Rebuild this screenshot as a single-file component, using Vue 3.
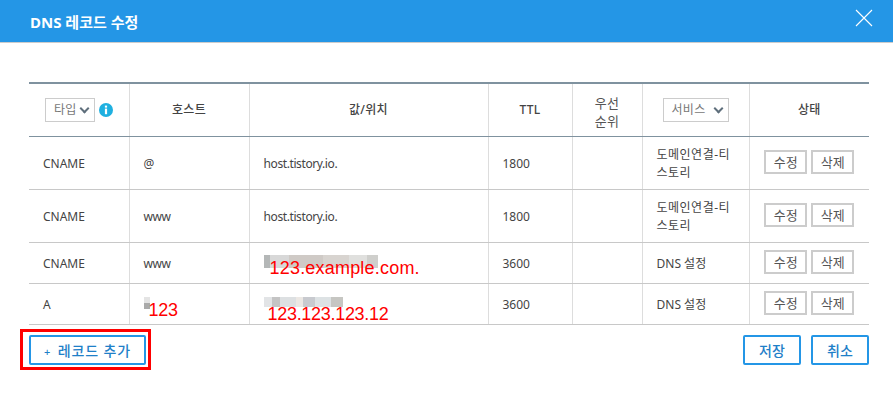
<template>
  <div class="modal">
    <header class="modal-head">
      <h1 class="modal-title">DNS 레코드 수정</h1>
      <button class="close" aria-label="닫기">
        <svg width="18" height="18" viewBox="0 0 18 18"><path d="M1 1L17 17M17 1L1 17" stroke="#fff" stroke-width="1.1" fill="none" /></svg>
      </button>
    </header>

    <div class="modal-body">
      <table class="record-table">
        <colgroup>
          <col style="width: 100px">
          <col style="width: 120px">
          <col style="width: 239px">
          <col style="width: 84px">
          <col style="width: 70px">
          <col style="width: 107px">
          <col style="width: 120px">
        </colgroup>
        <thead>
          <tr>
            <th>
              <div class="type-filter">
                <span class="fake-select small">타입<i class="chev"></i></span>
                <svg class="info" width="14" height="14" viewBox="0 0 14 14">
                  <circle cx="7" cy="7" r="7" fill="#1fb0e0" />
                  <rect x="5.9" y="2.6" width="2.2" height="2" fill="#fff" />
                  <rect x="5.9" y="5.6" width="2.2" height="5.6" fill="#fff" />
                </svg>
              </div>
            </th>
            <th>호스트</th>
            <th>값/위치</th>
            <th>TTL</th>
            <th class="priority">우선<br>순위</th>
            <th><span class="fake-select wide">서비스<i class="chev"></i></span></th>
            <th>상태</th>
          </tr>
        </thead>
        <tbody>
          <tr v-for="row in records" :key="row.id" :class="row.tall ? 'tall' : 'short'">
            <td>{{ row.type }}</td>
            <td class="over">
              {{ row.host }}
              <template v-if="row.hostNote">
                <span class="blur host-blur"></span>
                <span class="note host-note">{{ row.hostNote }}</span>
              </template>
            </td>
            <td class="over">
              {{ row.value }}
              <template v-if="row.valueNote">
                <span class="blur" :class="row.blurClass"></span>
                <span class="note" :class="row.noteClass">{{ row.valueNote }}</span>
              </template>
            </td>
            <td>{{ row.ttl }}</td>
            <td></td>
            <td class="service">{{ row.service }}</td>
            <td class="actions">
              <button class="mini">수정</button>
              <button class="mini">삭제</button>
            </td>
          </tr>
        </tbody>
      </table>

      <div class="foot">
        <span class="add-mark">
          <button class="btn add"><span class="plus">+</span> 레코드 추가</button>
        </span>
        <div class="foot-right">
          <button class="btn">저장</button>
          <button class="btn">취소</button>
        </div>
      </div>
    </div>
  </div>
</template>

<script setup>
const records = [
  { id: 1, type: 'CNAME', host: '@', value: 'host.tistory.io.', ttl: 1800, service: '도메인연결-티스토리', tall: true },
  { id: 2, type: 'CNAME', host: 'www', value: 'host.tistory.io.', ttl: 1800, service: '도메인연결-티스토리', tall: true },
  { id: 3, type: 'CNAME', host: 'www', value: '', valueNote: '123.example.com.', blurClass: 'blur-first', noteClass: 'first', ttl: 3600, service: 'DNS 설정' },
  { id: 4, type: 'A', host: '', hostNote: '123', value: '', valueNote: '123.123.123.12', blurClass: 'blur-second', noteClass: 'second', ttl: 3600, service: 'DNS 설정' },
]
</script>

<style>
html, body {
  margin: 0;
  background: #fff;
}
</style>

<style scoped>
.modal {
  width: 893px;
  height: 405px;
  overflow: hidden;
  font-family: "Noto Sans", "Noto Sans CJK KR", sans-serif;
  font-size: 12px;
  color: #444;
}
.modal-head {
  height: 42px;
  border-bottom: 1px solid #ccc;
  background: #2496e6;
  display: flex;
  align-items: center;
  justify-content: space-between;
  padding: 0 20px 0 30px;
}
.modal-title {
  margin: 0;
  font-size: 15px;
  font-weight: 700;
  color: #fff;
}
.close {
  display: flex;
  margin-top: -6px;
  padding: 0;
  border: 0;
  background: none;
}
.modal-body {
  padding: 39px 24px 0 29px;
}
.record-table {
  width: 840px;
  table-layout: fixed;
  border-collapse: collapse;
  border-top: 2px solid #7f929f;
}
.record-table th {
  height: 52px;
  padding: 0;
  border-left: 1px solid #ddd;
  border-bottom: 1px solid #7f929f;
  font-weight: 500;
  letter-spacing: 0.3px;
  color: #444;
  text-align: center;
  line-height: 18px;
}
.record-table td {
  padding: 2px 14px 0;
  border-left: 1px solid #ddd;
  border-bottom: 1px solid #c8c8c8;
  line-height: 18px;
}
.record-table th:first-child,
.record-table td:first-child {
  border-left: 0;
}
.tall td {
  height: 50px;
}
.short td {
  height: 38px;
}
.record-table .priority {
  height: 48px;
  padding-top: 4px;
  font-size: 13px;
  font-weight: 400;
  color: #555;
}
.type-filter {
  display: flex;
  align-items: center;
  gap: 4px;
  padding-left: 16px;
}
.fake-select {
  box-sizing: border-box;
  display: inline-flex;
  align-items: center;
  justify-content: space-between;
  height: 24px;
  padding: 0 4px 0 8px;
  border: 1px solid #ccc;
  font-weight: 400;
  color: #777;
}
.small {
  width: 50px;
}
.wide {
  width: 66px;
}
.chev {
  width: 5px;
  height: 5px;
  margin: -3px 2px 0 0;
  border-right: 2px solid #5f6f7c;
  border-bottom: 2px solid #5f6f7c;
  transform: rotate(45deg);
}
.service {
  word-break: break-all;
}
.tall .service {
  letter-spacing: 0.5px;
}
.record-table .actions {
  padding: 0;
  text-align: center;
  white-space: nowrap;
  font-size: 0;
}
.mini {
  box-sizing: border-box;
  width: 43px;
  height: 24px;
  padding: 0;
  border: 2px solid #ccc;
  background: #fff;
  font: inherit;
  font-size: 13px;
  color: #555;
}
.mini + .mini {
  margin-left: 4px;
}
.over {
  position: relative;
  letter-spacing: -0.4px;
}
.blur {
  position: absolute;
  display: block;
}
.blur-first {
  left: 14px;
  top: 12px;
  width: 114px;
  height: 13px;
  background:
    linear-gradient(90deg, #b4b7b7 0 5%, #d8d8d8 5% 22%, #cfcac6 22% 52%, #d8d4d0 52% 75%, #e0e0de 75% 90%, #cfcfcc 90% 100%);
}
.blur-second {
  left: 14px;
  top: 13px;
  width: 79px;
  height: 10px;
  background:
    linear-gradient(90deg, #e2e4e6 0 10%, #c4c4c4 10% 20%, #dde0e2 20% 40%, #ece8e4 40% 50%, #c8cacf 50% 65%, #dde2e4 65% 85%, #c6c6c2 85% 100%);
}
.host-blur {
  left: 14px;
  top: 13px;
  width: 6px;
  height: 12px;
  background: linear-gradient(180deg, #e4e4e4 50%, #aaa 50%);
}
.note {
  position: absolute;
  color: #f00;
  font-family: "Liberation Sans", sans-serif;
  font-size: 18px;
  line-height: 20px;
  white-space: nowrap;
}
.host-note {
  left: 19px;
  top: 16px;
  letter-spacing: -0.3px;
}
.first {
  left: 20px;
  top: 15px;
  letter-spacing: 0.2px;
}
.second {
  left: 18px;
  top: 20px;
  letter-spacing: -0.3px;
}
.foot {
  display: flex;
  justify-content: space-between;
  align-items: flex-start;
  margin-top: 4px;
}
.add-mark {
  display: flex;
  margin-left: -9px;
  padding: 3px 2px 2px 6px;
  border: 3px solid #f00;
}
.btn {
  box-sizing: border-box;
  height: 30px;
  width: 58px;
  padding: 0;
  border: 2px solid #2496e6;
  border-radius: 2px;
  background: #fff;
  font: inherit;
  font-size: 14px;
  font-weight: 500;
  color: #1f80c8;
}
.add {
  width: 117px;
  letter-spacing: 0.9px;
}
.plus {
  font-size: 11px;
  margin-right: 2px;
}
.foot-right {
  display: flex;
  gap: 10px;
  margin-top: 6px;
}
</style>
